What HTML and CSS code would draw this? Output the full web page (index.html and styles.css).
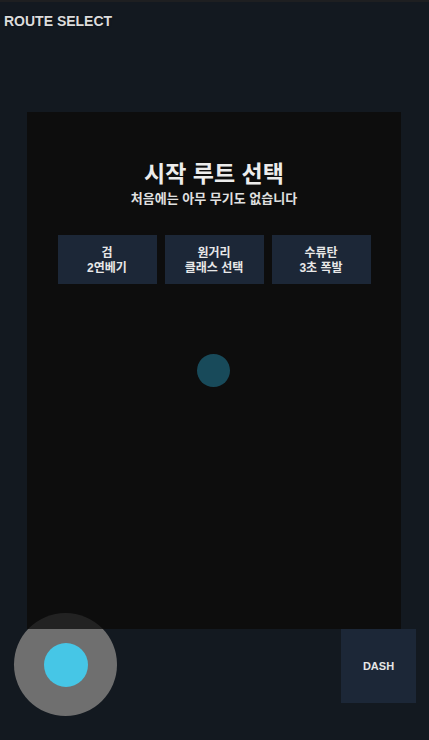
FILE: index.html
```html
<!DOCTYPE html>
<html lang="ko">
<head>
  <meta charset="UTF-8">
  <meta name="viewport" content="width=device-width, initial-scale=1.0">
  <title>route select</title>
  <link rel="stylesheet" href="styles.css">
</head>

<body>
  <div class="app">
    <div class="hud">ROUTE SELECT</div>

    <div class="stage">
      <h1 class="title">시작 루트 선택</h1>
      <p class="sub">처음에는 아무 무기도 없습니다</p>
      <div class="routes">
        <button class="route">검<br>2연베기</button>
        <button class="route">원거리<br>클래스 선택</button>
        <button class="route">수류탄<br>3초 폭발</button>
      </div>
      <div class="player"></div>
    </div>

    <div class="controls">
      <div class="stick">
        <div class="knob"></div>
      </div>
      <button class="dash">DASH</button>
    </div>
  </div>
</body>
</html>
```

FILE: styles.css
```css
*{
  margin: 0;
  padding: 0;
  box-sizing: border-box;
}
body{
  background: #131920;
  font-family: "Liberation Sans", "Noto Sans CJK KR", sans-serif;
  color: #e6e6e6;
}
.app{
  position: relative;
  width: 429px;
  height: 740px;
  border-top: 2px solid #1e1f21;
}
.hud{
  padding: 11px 0 0 4px;
  height: 110px;
  font-size: 14px;
  font-weight: bold;
  color: #dcdcdc;
  text-shadow: 0 0 2px rgba(0,0,0,0.6);
}
.stage{
  margin-left: 27px;
  width: 374px;
  height: 517px;
  background: #0d0d0d;
  padding-top: 46px;
  display: flex;
  flex-direction: column;
  align-items: center;
  font-family: "Noto Sans CJK KR", sans-serif;
}
.title{
  font-size: 23px;
  line-height: 28px;
  font-weight: bold;
  color: #ececec;
}
.sub{
  margin-top: 3px;
  font-size: 13px;
  line-height: 17px;
  font-weight: bold;
  color: #e0e0e0;
}
.routes{
  margin-top: 29px;
  display: flex;
  gap: 8px;
}
.route{
  width: 99px;
  height: 49px;
  border: none;
  background: #1c2737;
  color: #e8e8e8;
  font-family: "Liberation Sans", "Noto Sans CJK KR", sans-serif;
  font-size: 12px;
  line-height: 15px;
  font-weight: bold;
  padding-top: 2px;
}
.player{
  margin-top: 70px;
  margin-right: 2px;
  width: 33px;
  height: 33px;
  border-radius: 50%;
  background: #184a5a;
}
.controls{
  display: flex;
  justify-content: flex-end;
  padding-right: 13px;
}
.dash{
  width: 75px;
  height: 74px;
  border: none;
  background: #1c2737;
  color: #e6e6e6;
  font-family: "Liberation Sans", sans-serif;
  font-size: 11px;
  font-weight: bold;
}
.stick{
  position: absolute;
  left: 14px;
  top: 611px;
  width: 103px;
  height: 103px;
  border-radius: 50%;
  background: linear-gradient(to bottom, #222 0 16px, #6f6f6f 16px);
  display: flex;
  align-items: center;
  justify-content: center;
}
.knob{
  width: 44px;
  height: 44px;
  border-radius: 50%;
  background: #46c6e6;
}
```
